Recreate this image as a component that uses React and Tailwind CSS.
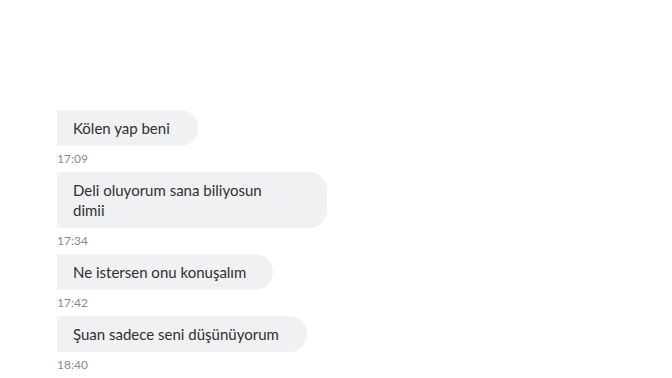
export default function App() {
  const msgs = [
    { text: "Kölen yap beni", time: "17:09", w: "w-[141px]" },
    { text: <>Deli oluyorum sana biliyosun<br />dimii</>, time: "17:34", w: "w-[270px]" },
    { text: "Ne istersen onu konuşalım", time: "17:42", w: "w-[216px]" },
    { text: "Şuan sadece seni düşünüyorum", time: "18:40", w: "w-[250px]" },
  ];
  return (
    <div className="w-[672px] h-[378px] bg-white overflow-hidden pl-[57px] pt-[110px]" style={{ fontFamily: "Lato, 'Noto Sans', sans-serif" }}>
      {msgs.map((m, i) => (
        <div key={i} className="flex flex-col items-start">
          <div className={`${m.w} bg-[#f0f1f3] rounded-r-[18px] pl-4 py-2 text-[15px] leading-[20px] text-[#303030]`}>
            {m.text}
          </div>
          <div className="my-[5px] text-[12px] leading-[16px] text-[#8a8a8a]">{m.time}</div>
        </div>
      ))}
    </div>
  );
}
